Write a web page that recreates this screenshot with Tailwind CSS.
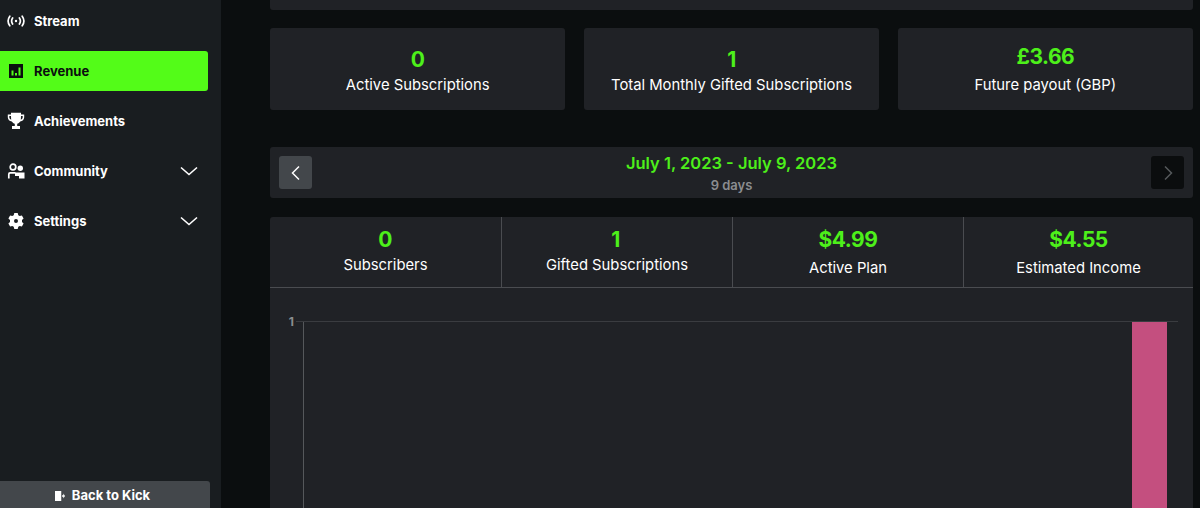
<!DOCTYPE html>
<html>
<head>
<meta charset="utf-8">
<script src="https://cdn.jsdelivr.net/npm/@tailwindcss/browser@4"></script>
</head>
<body class="m-0">
<div class="flex h-[508px] w-[1200px] overflow-hidden bg-[#0b0e0f] font-['Inter','Liberation_Sans',sans-serif] text-white">
  <aside class="flex h-full w-[221px] shrink-0 flex-col bg-[#191d20] pt-px">
    <nav class="flex flex-col gap-[10px] pr-[13px] text-[13px] font-bold">
      <a class="flex h-10 items-center gap-[9px] pl-[7px]">
        <svg class="h-[18px] w-[18px]" viewBox="0 0 18 18" fill="none" stroke="currentColor" stroke-width="1.700" stroke-linecap="round"><path d="M2.800 4.200C.8 7 .8 11 2.800 13.800M15.200 4.200c2 2.800 2 6.800 0 9.600M5.600 6C4.400 7.800 4.400 10.200 5.600 12M12.400 6c1.200 1.800 1.200 4.200 0 6"/><circle cx="9" cy="9" r="1.200" fill="currentColor" stroke="none"/></svg>
        <span class="pt-px">Stream</span>
      </a>
      <a class="flex h-10 items-center gap-[9px] rounded-r-[3px] bg-[#53fc18] pl-[7px] text-[#0b0e0f]">
        <svg class="h-[18px] w-[18px]" viewBox="0 0 18 18"><path fill="currentColor" fill-rule="evenodd" d="M2 2h14v14H2zM4.500 8.500v5h2v-5zM8 11v2.500h2V11zM11.500 5.500v8h2v-8z"/></svg>
        <span class="pt-px">Revenue</span>
      </a>
      <a class="flex h-10 items-center gap-[9px] pl-[7px]">
        <svg class="h-[18px] w-[18px]" viewBox="0 0 18 18"><path fill="currentColor" fill-rule="evenodd" d="M4 .8h10V2.500h3.200v2.800c0 2.300-1.700 4-4 4.200-.8 1.200-1.900 2-3 2.300V14H13v3H5v-3h2.800v-2.200c-1.100-.3-2.200-1.100-3-2.300-2.300-.2-4-1.900-4-4.200V2.500H4zM2.300 4v1.300c0 1.200.8 2.100 1.900 2.500C4.100 6.700 4 5.400 4 4zM15.700 4H14c0 1.400-.1 2.700-.2 3.800 1.100-.4 1.900-1.300 1.900-2.500z"/></svg>
        <span class="pt-px">Achievements</span>
      </a>
      <a class="flex h-10 items-center gap-[9px] pl-[7px]">
        <svg class="h-[18px] w-[18px]" viewBox="0 0 18 18"><circle cx="6" cy="5" r="2.800" fill="none" stroke="currentColor" stroke-width="1.700"/><path fill="none" stroke="currentColor" stroke-width="1.700" d="M1.800 16.500v-4.300c0-.8.600-1.300 1.300-1.300h5.400"/><circle cx="13.300" cy="6.300" r="2.700" fill="currentColor"/><path fill="currentColor" d="M8 10.500h9.500v6H12V14H8z"/></svg>
        <span class="pt-px">Community</span>
        <svg class="ml-auto mr-[10px] h-[18px] w-[18px]" viewBox="0 0 18 18" fill="none" stroke="currentColor" stroke-width="1.600"><path d="M1 5.500 9 12.500l8-7"/></svg>
      </a>
      <a class="flex h-10 items-center gap-[9px] pl-[7px]">
        <svg class="h-[18px] w-[18px]" viewBox="0 0 18 18"><path fill="currentColor" fill-rule="evenodd" d="M7.300 1h3.400l.6 2.200 1.400.8 2.200-.6 1.700 3-1.600 1.600v2l1.600 1.600-1.700 3-2.200-.6-1.400.8-.6 2.200H7.300l-.6-2.200-1.400-.8-2.200.6-1.700-3 1.600-1.600V8L1.400 6.400l1.700-3 2.200.6 1.400-.8zM9 7a2 2 0 1 0 0 4 2 2 0 0 0 0-4z"/></svg>
        <span class="pt-px">Settings</span>
        <svg class="ml-auto mr-[10px] h-[18px] w-[18px]" viewBox="0 0 18 18" fill="none" stroke="currentColor" stroke-width="1.600"><path d="M1 5.500 9 12.500l8-7"/></svg>
      </a>
    </nav>
    <button class="mt-auto flex h-[27px] w-[210px] items-center justify-center gap-[7px] rounded-tr-[3px] bg-[#43474b] pt-[3px] pr-[5px] text-[13px] font-bold">
      <svg class="h-[10px] w-[10px]" viewBox="0 0 12 12"><path fill="currentColor" d="M0 0h7.500v12H0zM8.500 5H10V3l2 3-2 3V7H8.500z"/></svg>
      Back to Kick
    </button>
  </aside>
  <main class="flex w-[972px] flex-col pl-[49px] -mt-[10px]">
    <div class="h-5 w-[923px] shrink-0 rounded-[3px] bg-[#202226]"></div>
    <div class="mt-[18px] grid h-[82px] w-[923px] shrink-0 grid-cols-3 gap-[18.5px]">
      <div class="flex flex-col items-center rounded-[3px] bg-[#202226] pt-[18px]">
        <div class="text-[21px] leading-[27px] font-bold tracking-[-0.5px] text-[#4df01a]">0</div>
        <div class="text-[14.800px] leading-[24px]">Active Subscriptions</div>
      </div>
      <div class="flex flex-col items-center rounded-[3px] bg-[#202226] pt-[18px]">
        <div class="text-[21px] leading-[27px] font-bold tracking-[-0.5px] text-[#4df01a]">1</div>
        <div class="text-[14.800px] leading-[24px]">Total Monthly Gifted Subscriptions</div>
      </div>
      <div class="flex flex-col items-center rounded-[3px] bg-[#202226] pt-[15px]">
        <div class="text-[21px] leading-[27px] font-bold tracking-[-0.5px] text-[#4df01a]">£3.66</div>
        <div class="mt-[3px] text-[14.800px] leading-[24px]">Future payout (GBP)</div>
      </div>
    </div>
    <div class="mt-[37px] flex h-[51px] w-[923px] shrink-0 items-center justify-between rounded-[3px] bg-[#202226] px-[9px]">
      <button class="flex h-[33px] w-[33px] items-center justify-center rounded-[3px] bg-[#43474b]">
        <svg class="h-[18px] w-[18px]" viewBox="0 0 18 18" fill="none" stroke="#fff" stroke-width="1.500"><path d="M12 2.500 5.500 9l6.500 6.500"/></svg>
      </button>
      <div class="flex flex-col items-center pt-px">
        <div class="text-[16.500px] leading-[24px] font-semibold text-[#4df01a]">July 1, 2023 - July 9, 2023</div>
        <div class="text-[13px] leading-[20px] font-semibold text-[#8b8d90]">9 days</div>
      </div>
      <button class="flex h-[33px] w-[33px] items-center justify-center rounded-[3px] bg-[#0b0d0e]">
        <svg class="h-[18px] w-[18px]" viewBox="0 0 18 18" fill="none" stroke="#55585b" stroke-width="1.500"><path d="M6 2.500 12.500 9 6 15.500"/></svg>
      </button>
    </div>
    <div class="mt-[19px] flex w-[923px] flex-1 flex-col rounded-t-[3px] bg-[#202226]">
      <div class="grid h-[71px] shrink-0 grid-cols-[231px_231px_231px_230px] border-b border-[#4a4c50]">
        <div class="flex flex-col items-center pt-[9px]">
          <div class="pr-px text-[21px] leading-[27px] font-bold tracking-[-0.5px] text-[#4df01a]">0</div>
          <div class="text-[14.800px] leading-[24px]">Subscribers</div>
        </div>
        <div class="flex flex-col items-center border-l border-[#4a4c50] pt-[9px]">
          <div class="pr-[3px] text-[21px] leading-[27px] font-bold tracking-[-0.5px] text-[#4df01a]">1</div>
          <div class="text-[14.800px] leading-[24px]">Gifted Subscriptions</div>
        </div>
        <div class="flex flex-col items-center border-l border-[#4a4c50] pt-[9px]">
          <div class="text-[21px] leading-[27px] font-bold tracking-[-0.5px] text-[#4df01a]">$4.99</div>
          <div class="mt-[3px] text-[14.800px] leading-[24px]">Active Plan</div>
        </div>
        <div class="flex flex-col items-center border-l border-[#4a4c50] pt-[9px]">
          <div class="text-[21px] leading-[27px] font-bold tracking-[-0.5px] text-[#4df01a]">$4.55</div>
          <div class="mt-[3px] text-[14.800px] leading-[24px]">Estimated Income</div>
        </div>
      </div>
      <div class="flex flex-1 pt-[33px]">
        <div class="-mt-[5px] h-3 w-[24px] text-right text-[12px] leading-none font-bold text-[#8b8d90]">1</div>
        <div class="relative ml-[9px] mr-[15px] flex flex-1 justify-end border-t border-l border-t-[#3a3c40] border-l-[#55585b] pr-[11px]">
          <div class="absolute -top-px -left-[8px] h-px w-[8px] bg-[#3a3c40]"></div>
          <div class="w-[35px] bg-[#c44f7f]"></div>
        </div>
      </div>
    </div>
  </main>
</div>
</body>
</html>
